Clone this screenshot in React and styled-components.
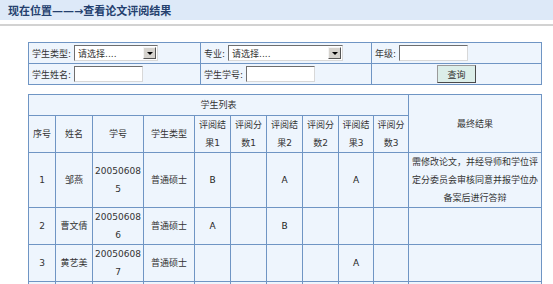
import styled, { createGlobalStyle } from "styled-components"

const GlobalStyle = createGlobalStyle`
html, body {
  margin: 0;
  overflow: hidden;
  background: #fff;
}
body {
  font-family: "DejaVu Sans", "Noto Sans CJK SC", sans-serif;
  font-size: 9px;
  color: #333;
}
`

const TitleBar = styled.div`
display: flex;
align-items: center;
height: 20px;
padding-left: 8px;
background: #dde9f8;
color: #24406e;
font-size: 11px;
font-weight: bold;
`
const Rule = styled.div`
margin-top: 4px;
height: 2px;
background: #d2d2d2;
`
const Content = styled.div`
display: flex;
flex-direction: column;
gap: 9px;
padding: 16px 0 0 28px;
`
const SearchTable = styled.table`
width: 513px;
border-collapse: collapse;
table-layout: fixed;
background: #eef5fd;

td {
  height: 20px;
  padding: 0 3px;
  border: 1px solid #6f95c4;
}
`
const Field = styled.div`
display: flex;
align-items: center;
justify-content: ${(props) => (props.center ? "center" : "flex-start")};
gap: 3px;
white-space: nowrap;
`
const SelectBox = styled.div`
display: flex;
align-items: center;
justify-content: space-between;
box-sizing: border-box;
width: ${(props) => props.w}px;
height: 16px;
padding: 0 1px 0 3px;
background: #fff;
border-top: 1px solid #6e6e6e;
border-left: 1px solid #6e6e6e;
border-right: 1px solid #d8d8d8;
border-bottom: 1px solid #d8d8d8;
color: #333;
`
const ArrowButton = styled.span`
display: flex;
align-items: center;
justify-content: center;
box-sizing: border-box;
width: 13px;
height: 12px;
background: #d6d3ce;
border-top: 1px solid #f4f4f4;
border-left: 1px solid #f4f4f4;
border-right: 1px solid #555;
border-bottom: 1px solid #555;

&::after {
  content: "";
  border-left: 3px solid transparent;
  border-right: 3px solid transparent;
  border-top: 3px solid #000;
}
`
const TextInput = styled.input`
box-sizing: border-box;
width: ${(props) => props.w}px;
height: 16px;
padding: 0 2px;
background: #fff;
border-top: 1px solid #6e6e6e;
border-left: 1px solid #6e6e6e;
border-right: 1px solid #d8d8d8;
border-bottom: 1px solid #d8d8d8;
font: inherit;
outline: none;
`
const QueryButton = styled.button`
box-sizing: border-box;
width: 39px;
height: 18px;
padding: 0;
background: #dceee9;
border-top: 1px solid #9a9a9a;
border-left: 1px solid #9a9a9a;
border-right: 1px solid #4a4a4a;
border-bottom: 1px solid #4a4a4a;
color: #333;
font: inherit;
`
const ListTable = styled.table`
width: 513px;
border-collapse: collapse;
table-layout: fixed;
background: #eef5fd;

th, td {
  padding: 0 1px;
  border: 1px solid #6f95c4;
  line-height: 18px;
  text-align: center;
  font-weight: normal;
  word-break: break-all;
}
`
const CaptionCell = styled.th`
height: 20px;
`
const MarkCell = styled.td`
color: #222;
`
const BlankRow = styled.tr`
td {
  height: 36px;
}
`

const columns = [27, 37, 51, 51, 36, 36, 36, 36, 35, 35, 133]
const headers = ["序号", "姓名", "学号", "学生类型", "评阅结果1", "评阅分数1", "评阅结果2", "评阅分数2", "评阅结果3", "评阅分数3"]

const students = [
  { no: 1, name: "邹燕", id: "200506085", type: "普通硕士", marks: ["B", "", "A", "", "A", ""], result: "需修改论文，并经导师和学位评定分委员会审核同意并报学位办备案后进行答辩" },
  { no: 2, name: "曹文倩", id: "200506086", type: "普通硕士", marks: ["A", "", "B", "", "", ""], result: "" },
  { no: 3, name: "黄艺美", id: "200506087", type: "普通硕士", marks: ["", "", "", "", "A", ""], result: "" },
]

function App() {
  return (
    <>
      <GlobalStyle />
      <TitleBar>现在位置——→查看论文评阅结果</TitleBar>
      <Rule />
      <Content>
        <SearchTable>
          <colgroup>
            <col style={{ width: 172 }} />
            <col style={{ width: 171 }} />
            <col style={{ width: 170 }} />
          </colgroup>
          <tbody>
            <tr>
              <td>
                <Field>学生类型:<SelectBox w={84}>请选择....<ArrowButton /></SelectBox></Field>
              </td>
              <td>
                <Field>专业:<SelectBox w={115}>请选择....<ArrowButton /></SelectBox></Field>
              </td>
              <td>
                <Field>年级:<TextInput w={69} /></Field>
              </td>
            </tr>
            <tr>
              <td>
                <Field>学生姓名:<TextInput w={69} /></Field>
              </td>
              <td>
                <Field>学生学号:<TextInput w={69} /></Field>
              </td>
              <td>
                <Field center><QueryButton>查询</QueryButton></Field>
              </td>
            </tr>
          </tbody>
        </SearchTable>

        <ListTable>
          <colgroup>
            {columns.map((w, i) => <col key={i} style={{ width: w }} />)}
          </colgroup>
          <thead>
            <tr>
              <CaptionCell colSpan={10}>学生列表</CaptionCell>
              <th rowSpan={2}>最终结果</th>
            </tr>
            <tr>
              {headers.map((h) => <th key={h}>{h}</th>)}
            </tr>
          </thead>
          <tbody>
            {students.map((s) => (
              <tr key={s.no}>
                <td>{s.no}</td>
                <td>{s.name}</td>
                <td>{s.id}</td>
                <td>{s.type}</td>
                {s.marks.map((m, i) => <MarkCell key={i}>{m}</MarkCell>)}
                <td>{s.result}</td>
              </tr>
            ))}
            <BlankRow>
              {columns.map((w, i) => <td key={i} />)}
            </BlankRow>
          </tbody>
        </ListTable>
      </Content>
    </>
  )
}

export default App
